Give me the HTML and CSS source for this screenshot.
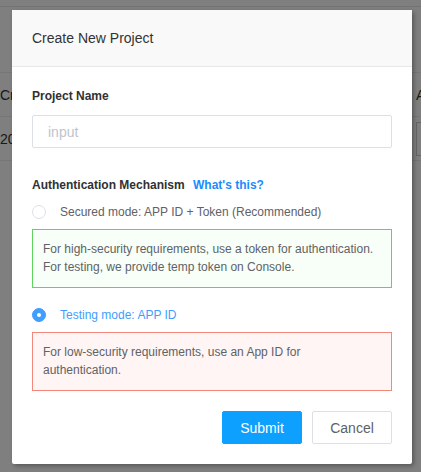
FILE: index.html
```html
<!DOCTYPE html>
<html>
<head>
<meta charset="utf-8">
<link rel="stylesheet" href="styles.css">
</head>
<body>
<div class="page">
  <div class="topbar"></div>
  <div class="table">
    <div class="trow thead"><span class="c1">Created</span><span class="c2">Action</span></div>
    <div class="trow"><span class="c1">2020-01-01</span><span class="c2"><span class="btn-bg">Edit</span></span></div>
  </div>
</div>
<div class="overlay"></div>
<div class="modal">
  <div class="modal-header">Create New Project</div>
  <div class="modal-body">
    <div class="label">Project Name</div>
    <div class="input">input</div>
    <div class="label auth">Authentication Mechanism <a class="help">What's this?</a></div>
    <div class="radio-row"><span class="radio"></span><span class="radio-label">Secured mode: APP ID + Token (Recommended)</span></div>
    <div class="note note-green">For high-security requirements, use a token for authentication. For testing, we provide temp token on Console.</div>
    <div class="radio-row checked"><span class="radio"></span><span class="radio-label">Testing mode: APP ID</span></div>
    <div class="note note-red">For low-security requirements, use an App ID for authentication.</div>
    <div class="actions">
      <button class="btn primary">Submit</button>
      <button class="btn">Cancel</button>
    </div>
  </div>
</div>
</body>
</html>
```
FILE: styles.css
```css
* { box-sizing: border-box; }
html, body { margin: 0; padding: 0; }
body {
  width: 421px; height: 472px; overflow: hidden;
  font-family: "Liberation Sans", Arial, sans-serif;
  background: #fff;
  position: relative;
}
.page { height: 472px; overflow: hidden; }
.topbar { height: 7px; border-bottom: 1px solid #e6e6e6; }
.table { margin-top: 65px; border-top: 1px solid #ececec; }
.trow { display: flex; justify-content: space-between; height: 44px; align-items: center; border-bottom: 1px solid #ececec; font-size: 14px; color: #333; }
.trow .c1 { margin-left: 0; }
.trow .c2 { width: 5px; overflow: hidden; white-space: nowrap; }
.btn-bg { display: inline-block; border: 1px solid #ccc; height: 34px; width: 40px; color: transparent; }
.overlay { position: absolute; inset: 0; background: rgba(0,0,0,0.5); }
.modal {
  position: absolute; left: 12px; top: 10px; width: 400px; height: 454px;
  background: #fff; border-radius: 2px;
  box-shadow: 2px 2px 4px rgba(0,0,0,0.3);
}
.modal-header {
  height: 57px; background: #f9f9f9; border-bottom: 1px solid #e8e8e8;
  padding: 0 20px; display: flex; align-items: center;
  font-size: 14px; color: #333;
}
.modal-body { padding: 20px 20px 21px; }
.label { font-size: 12px; font-weight: bold; color: #303133; line-height: 18px; }
.input {
  margin-top: 10px; height: 33px; border: 1px solid #dcdfe6; border-radius: 2px;
  padding: 0 15px; display: flex; align-items: center; font-size: 14px; color: #c0c4cc;
}
.auth { margin-top: 28px; }
.help { color: #1a8cff; margin-left: 5px; }
.radio-row { display: flex; align-items: center; margin-top: 9px; height: 18px; font-size: 12px; color: #606266; }
.radio { width: 14px; height: 14px; border: 1px solid #dcdfe6; border-radius: 50%; margin-right: 14px; flex: none; }
.checked { margin-top: 18px; color: #409eff; }
.checked .radio { background: #409eff; border-color: #409eff; display: flex; align-items: center; justify-content: center; }
.checked .radio::after { content: ""; width: 4px; height: 4px; background: #fff; border-radius: 50%; }
.note { margin-top: 8px; padding: 10px 10px 11px; font-size: 12px; line-height: 18px; color: #606266; }
.note-green { border: 1px solid #5fd45f; background: #f7fff8; }
.note-red { border: 1px solid #f2877a; background: #fff5f4; }
.actions { display: flex; justify-content: flex-end; gap: 10px; margin-top: 20px; }
.btn {
  width: 80px; height: 33px; border: 1px solid #dcdfe6; background: #fff; border-radius: 2px;
  font-family: inherit; font-size: 14px; color: #606266;
}
.btn.primary { background: #0ea0ff; border-color: #0ea0ff; color: #fff; }
```
